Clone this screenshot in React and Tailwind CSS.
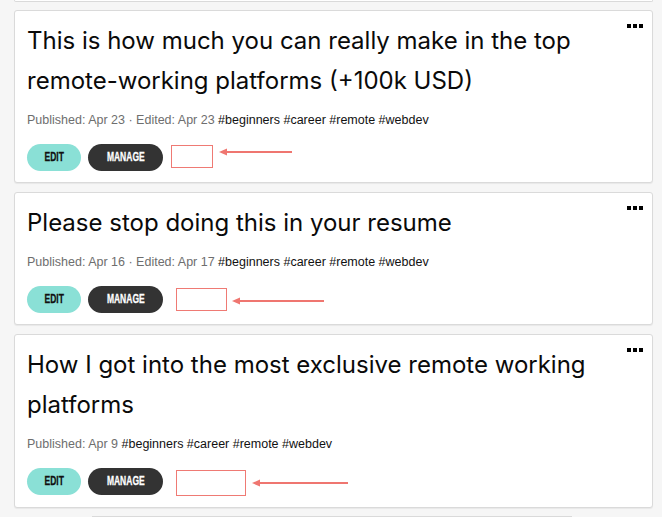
import React from "react";

const posts = [
	{
		title: "This is how much you can really make in the top remote-working platforms (+100k USD)",
		meta: "Published: Apr 23 · Edited: Apr 23",
		box: "ml-[8px] mt-[1px] w-[42px] h-[23px]",
		arrowClass: "ml-[6px] mt-[2px]",
		arrowW: 73,
	},
	{
		title: "Please stop doing this in your resume",
		meta: "Published: Apr 16 · Edited: Apr 17",
		box: "ml-[13px] mt-[2px] w-[51px] h-[23px]",
		arrowClass: "ml-[5px] mt-[9px]",
		arrowW: 92,
	},
	{
		title: "How I got into the most exclusive remote working platforms",
		meta: "Published: Apr 9",
		box: "ml-[13px] mt-[2px] w-[70px] h-[26px]",
		arrowClass: "ml-[6px] mt-[9px]",
		arrowW: 96,
	},
];

const Arrow = ({ w, className }) => (
	<svg width={w} height="12" viewBox={`0 0 ${w} 12`} className={className}>
		<line x1="6" y1="6" x2={w} y2="6" stroke="#ef7670" strokeWidth="2" />
		<polygon points="0,6 8,2.5 8,9.5" fill="#ef7670" />
	</svg>
);

// condensed label: Arial bold squeezed horizontally
const Label = ({ children }) => (
	<span className="inline-block scale-x-[0.68] text-[12.5px] font-bold uppercase font-['Liberation_Sans',sans-serif] [-webkit-text-stroke:0.3px_currentColor]">
		{children}
	</span>
);

const Card = ({ post }) => (
	<div className="relative bg-white border border-[#dadada] rounded-[3px] shadow-[0_1px_1px_rgba(0,0,0,0.06)] pt-[10px] pb-[11px] pl-[12px] pr-[40px]">
		<div className="absolute top-[13px] right-[9px] flex gap-[2px]">
			<span className="w-[4px] h-[4px] bg-black" />
			<span className="w-[4px] h-[4px] bg-black" />
			<span className="w-[4px] h-[4px] bg-black" />
		</div>
		<h2 className="text-[24px] leading-[40px] text-[#0a0a0a] font-[Inter,sans-serif] font-normal">
			{post.title}
		</h2>
		<div className="mt-[10px] text-[12.5px] leading-[18px] font-['Liberation_Sans',sans-serif]">
			<span className="text-[#6e6e6e]">{post.meta}</span>{" "}
			<span className="text-[#111]">#beginners #career #remote #webdev</span>
		</div>
		<div className="mt-[15px] flex items-start">
			<button className="w-[54px] h-[27px] rounded-full bg-[#8ae0d6] text-[#111] flex items-center justify-center">
				<Label>Edit</Label>
			</button>
			<button className="ml-[7px] w-[75px] h-[27px] rounded-full bg-[#333333] text-white flex items-center justify-center">
				<Label>Manage</Label>
			</button>
			<div className={`${post.box} border-[1.5px] border-[#ef7a74]`} />
			<Arrow w={post.arrowW} className={post.arrowClass} />
		</div>
	</div>
);

export default function App() {
	return (
		<div className="min-h-[517px] bg-[#f6f6f6] overflow-hidden">
			<div className="ml-[14px] w-[639px] h-[2px] bg-white border border-t-0 border-[#dadada] rounded-b-[3px]" />
			<div className="ml-[14px] w-[639px] mt-[8px] flex flex-col gap-[9px]">
				{posts.map((p, i) => (
					<Card key={i} post={p} />
				))}
			</div>
			<div className="ml-[92px] w-[480px] mt-[8px] h-[4px] border-t border-[#dadada] bg-white" />
		</div>
	);
}
